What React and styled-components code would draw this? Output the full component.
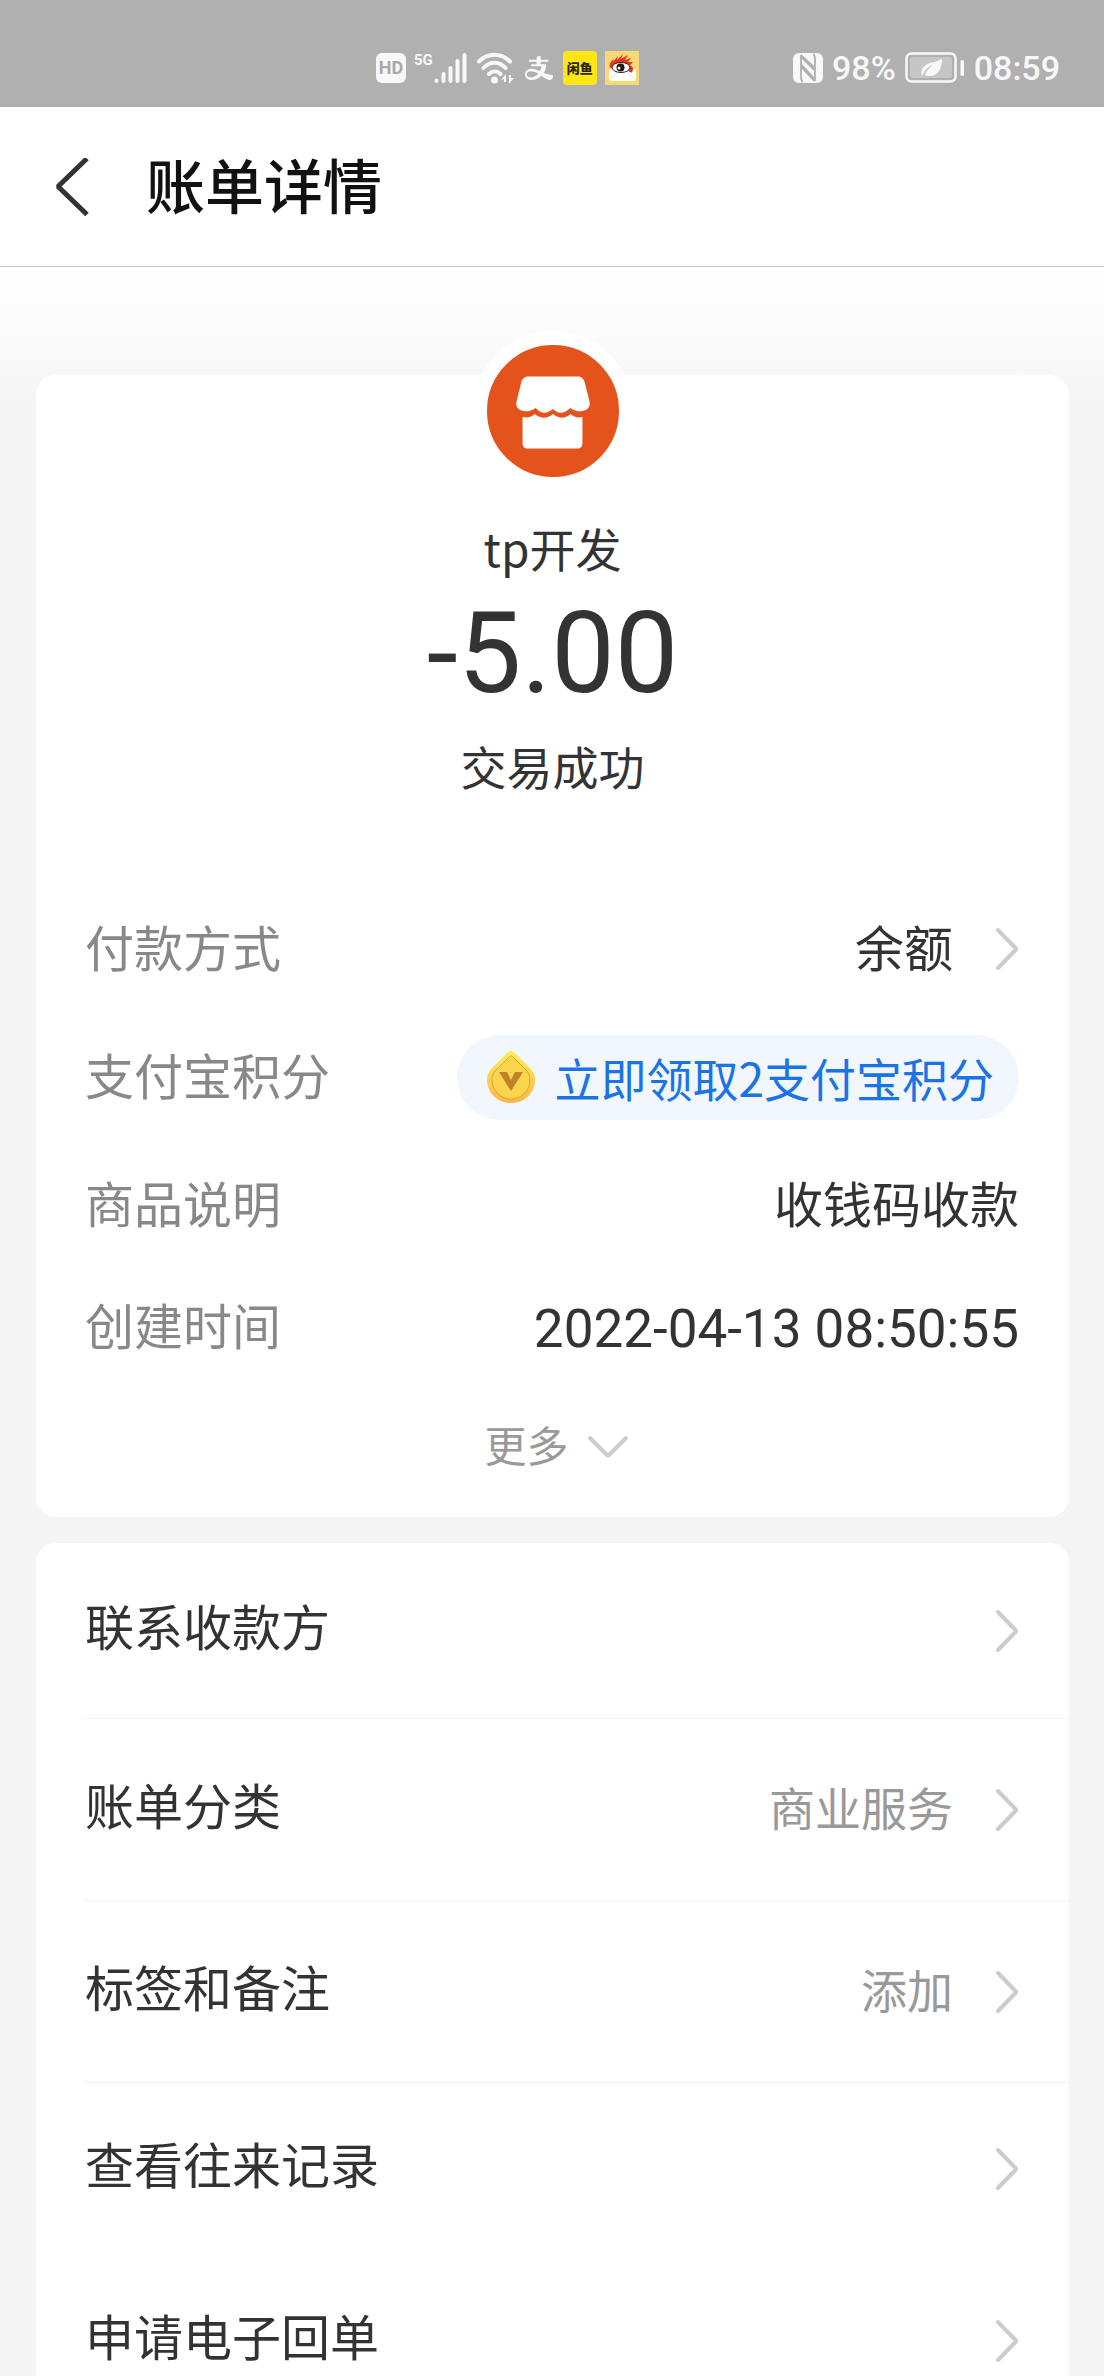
import React from "react";
import styled, { createGlobalStyle } from "styled-components";
import { AiOutlineAlipay } from "react-icons/ai";

const GlobalStyle = createGlobalStyle`
  * { box-sizing: border-box; }
  body {
    margin: 0;
    background: #f5f5f5;
    color: #333;
    font-family: "Noto Sans CJK SC", sans-serif;
  }
  a { color: inherit; text-decoration: none; }
  button {
    border: 0;
    padding: 0;
    background: none;
    color: inherit;
    font: inherit;
    cursor: pointer;
  }
  svg { display: block; flex: none; }
`;

const Screen = styled.div`
  height: 100vh;
  overflow: hidden;
  display: flex;
  flex-direction: column;
`;

const StatusBar = styled.div`
  flex: none;
  height: 107px;
  padding: 28px 44px 0 376px;
  display: flex;
  align-items: center;
  justify-content: space-between;
  background: #b0b0b0;
  color: #f8f8f8;
`;

const StatusGroup = styled.div`
  display: flex;
  align-items: center;
  gap: ${(p) => p.$gap}px;
`;

const HdBadge = styled.span`
  width: 30px;
  height: 30px;
  border-radius: 6px;
  background: #f8f8f8;
  color: #a8a8a8;
  font: 700 18px/30px Roboto, sans-serif;
  text-align: center;
`;

const Signal = styled.span`
  display: flex;
  align-items: flex-start;
`;

const Network = styled.span`
  font: 700 15px/16px Roboto, sans-serif;
`;

const FishBadge = styled.span`
  width: 34px;
  height: 34px;
  border-radius: 4px;
  background: #fde614;
  color: #2a2608;
  font-size: 13px;
  font-weight: 900;
  line-height: 34px;
  text-align: center;
`;

const StatusText = styled.span`
  font: 500 34px/40px Roboto, sans-serif;
`;

const Header = styled.header`
  flex: none;
  height: 160px;
  padding: 0 54px;
  display: flex;
  align-items: center;
  gap: 56px;
  background: #fff;
  border-bottom: 1px solid #c8c8c8;
`;

/* CJK glyphs sit low in their line box; the bottom padding centres them optically. */
const Title = styled.h1`
  margin: 0;
  padding-bottom: 6px;
  color: #111;
  font-size: 59px;
  font-weight: 500;
  line-height: 80px;
`;

const Content = styled.main`
  flex: 1;
  padding: 108px 35px 0 36px;
  display: flex;
  flex-direction: column;
  gap: 26px;
  background: linear-gradient(#fefefe 0, #fcfcfc 50px, #f5f5f5 140px);
`;

const Card = styled.section`
  flex: none;
  border-radius: 20px;
  background: #fff;
`;

const Summary = styled.div`
  display: flex;
  flex-direction: column;
  align-items: center;
`;

const Avatar = styled.div`
  width: 160px;
  height: 160px;
  margin-top: -44px;
  margin-bottom: 26px;
  border: 14px solid #fff;
  border-radius: 50%;
  background: #e5531d;
`;

const Line = styled.div`
  font-size: 46px;
  line-height: 60px;
`;

const Amount = styled.div`
  margin: 8px 0 12px;
  font: 400 113px/138px Roboto, sans-serif;
`;

const Details = styled.div`
  padding: 90px 50px 0 49px;
`;

const Row = styled.div`
  height: ${(p) => (p.$compact ? 116 : 128)}px;
  display: flex;
  align-items: center;
  justify-content: space-between;
  font-size: 49px;
  line-height: 64px;
`;

const Text = styled.span`
  padding-bottom: 6px;
`;

const Label = styled(Text)`
  color: #888;
`;

const Side = styled.span`
  display: flex;
  align-items: center;
  gap: 42px;
`;

const DateTime = styled.time`
  padding-top: 4px;
  font-family: Roboto, sans-serif;
  font-size: 53px;
`;

const PointsPill = styled.button`
  height: 85px;
  padding: 0 25px 0 30px;
  display: flex;
  align-items: center;
  gap: 19px;
  border-radius: 43px;
  background: #f1f7fd;
  color: #1a74e6;
  font-size: 46px;
  line-height: 60px;
`;

const More = styled.button`
  width: 100%;
  height: 132px;
  padding: 0 0 8px 8px;
  display: flex;
  align-items: center;
  justify-content: center;
  gap: 18px;
  color: #999;
  font-size: 42px;
  line-height: 56px;
`;

const Action = styled.a`
  height: ${(p) => p.$height}px;
  margin-left: 49px;
  padding-right: 50px;
  display: flex;
  align-items: center;
  justify-content: space-between;
  border-bottom: ${(p) => (p.$divided ? 1 : 0)}px solid #f2f2f2;
  font-size: 49px;
  line-height: 64px;
`;

const ActionLabel = styled.span`
  padding-bottom: 12px;
`;

const Hint = styled.span`
  padding-bottom: 8px;
  color: #999;
  font-size: 46px;
`;

const SignalIcon = () => (
  <svg width="34" height="32" viewBox="0 0 34 32" fill="none" stroke="#f8f8f8" strokeWidth="4" strokeLinecap="round">
    <path d="M3.500 28.500v.5M10.500 22v7M17.500 16v13M24.500 9v20M31.500 3v26" />
  </svg>
);

const WifiIcon = () => (
  <svg width="40" height="32" viewBox="0 0 40 32" fill="none" stroke="#f8f8f8" strokeWidth="4" strokeLinecap="round">
    <path d="M4 9.500C13 .5 26 .5 35 9.500M8.500 16c6.500-7 15.500-7 22 0M14 22c3.500-3.500 8-3.500 11.500 0" />
    <circle cx="19.500" cy="28" r="3.500" fill="#f8f8f8" stroke="none" />
    <path d="M26 28l5-6v8h-2v-3zM39 26l-5 6v-9h2v3z" fill="#f8f8f8" stroke="none" />
  </svg>
);

const EyeIcon = () => (
  <svg width="34" height="34" viewBox="0 0 34 34">
    <rect width="34" height="34" fill="#f9d976" />
    <path d="M4 18h27v9c0 2-1 3-3 3H7c-2 0-3-1-3-3z" fill="#fff" />
    <path d="M4 29l8-7M31 29l-8-7" stroke="#e4e0d8" strokeWidth="1" />
    <path d="M5 17c-1-4 1-7 4-9l-1 3 5-6-1 4 6-6-2 5 7-4-3 5 6-2-3 4 5 0-3 3c3 2 4 4 2 7-3 3-5-8-13-6-5 1-8 2-9 2z" fill="#e2361c" />
    <ellipse cx="16" cy="16.500" rx="9" ry="5" fill="#fff" stroke="#2c1c18" strokeWidth="1" />
    <circle cx="15.500" cy="16.500" r="4" fill="#1a1616" />
    <circle cx="14" cy="17" r="1.500" fill="#fff" />
  </svg>
);

const NfcIcon = () => (
  <svg width="30" height="30" viewBox="0 0 30 30">
    <rect width="30" height="30" rx="6" fill="#f8f8f8" />
    <path d="M8 2v22q0 4 2 5M22 28V6q0-4-2-5" fill="none" stroke="#b0b0b0" strokeWidth="1.800" />
    <path d="M8 1l13 12v5L8 5z" fill="#b0b0b0" />
    <path d="M9 11l12 13v5L9 16z" fill="#b0b0b0" />
  </svg>
);

const BatteryIcon = () => (
  <svg width="60" height="32" viewBox="0 0 60 32">
    <rect x="1.500" y="1.500" width="49" height="28" rx="5" fill="none" stroke="#f8f8f8" strokeWidth="2.500" />
    <rect x="5" y="5" width="42" height="21" rx="2" fill="#c6c6c6" />
    <path d="M17 25c-2-8 2-12 8-14 5-1 8-2 12-4 0 9-4 17-12 17-2 0-4 0-5-1 1-4 4-7 8-10-6 2-9 6-11 12z" fill="#f8f8f8" />
    <rect x="55.500" y="8" width="3.500" height="16" rx="1.500" fill="#f8f8f8" />
  </svg>
);

const BackIcon = () => (
  <svg width="36" height="58" viewBox="0 0 36 58" fill="none" stroke="#333" strokeWidth="5">
    <path d="M33 .5L4 28.500l29 28" strokeLinejoin="bevel" />
  </svg>
);

const ShopIcon = () => (
  <svg width="132" height="132" viewBox="0 0 130 130" fill="#fff">
    <path d="M41 31h48c4 0 6 2 7 5l5 20c2 8-9 13-19 6-6 6-12 6-17 1-6 5-12 5-17-1-10 7-21 2-19-6l5-20c1-3 3-5 7-5z" />
    <path d="M35 71c5 1 9 0 12-3 6 5 12 5 18 0 6 5 12 5 17 0 4 3 7 4 12 3v26c0 3-2 5-5 5H40c-3 0-5-2-5-5z" />
  </svg>
);

const CoinIcon = () => (
  <svg width="48" height="54" viewBox="0 0 48 54">
    <defs>
      <linearGradient id="coin" x1="0" y1="0" x2="0" y2="1">
        <stop offset="0" stopColor="#fbf05e" />
        <stop offset="1" stopColor="#fdb544" />
      </linearGradient>
    </defs>
    <path d="M24 1c2 0 3 1 5 3l12 12c4 4 7 8 7 14 0 13-11 23-24 23S0 43 0 30C0 24 3 20 7 16L19 4c2-2 3-3 5-3z" fill="url(#coin)" />
    <path d="M24 6c1 0 2 1 3 2l11 11c3 3 5 6 5 11 0 11-9 19-19 19S5 41 5 30c0-5 2-8 5-11L21 8c1-1 2-2 3-2z" fill="#fbd54d" stroke="#e0a52e" strokeWidth="1" />
    <path d="M12 22h8l4 8 4-8h8L24 41z" fill="#bf8428" />
  </svg>
);

const Chevron = () => (
  <svg width="24" height="44" viewBox="0 0 24 44" fill="none" stroke="#ccc" strokeWidth="4" strokeLinecap="round" strokeLinejoin="round">
    <path d="M3 3l17.500 18q1 1 0 2L3 41" />
  </svg>
);

const ChevronDown = () => (
  <svg width="42" height="24" viewBox="0 0 42 24" fill="none" stroke="#ccc" strokeWidth="4" strokeLinecap="round" strokeLinejoin="round">
    <path d="M3 3l17 17q1 1 2 0L39 3" />
  </svg>
);

const actions = [
  { label: "联系收款方", height: 176, divided: true },
  { label: "账单分类", hint: "商业服务", height: 182, divided: true },
  { label: "标签和备注", hint: "添加", height: 182, divided: true },
  { label: "查看往来记录", height: 172 },
  { label: "申请电子回单", height: 172 },
];

export default function App() {
  return (
    <Screen>
      <GlobalStyle />
      <StatusBar>
        <StatusGroup $gap={8}>
          <HdBadge>HD</HdBadge>
          <Signal>
            <Network>5G</Network>
            <SignalIcon />
          </Signal>
          <WifiIcon />
          <AiOutlineAlipay size={32} />
          <FishBadge>闲鱼</FishBadge>
          <EyeIcon />
        </StatusGroup>
        <StatusGroup $gap={9}>
          <NfcIcon />
          <StatusText>98%</StatusText>
          <BatteryIcon />
          <StatusText>08:59</StatusText>
        </StatusGroup>
      </StatusBar>
      <Header>
        <button aria-label="返回">
          <BackIcon />
        </button>
        <Title>账单详情</Title>
      </Header>
      <Content>
        <Card>
          <Summary>
            <Avatar>
              <ShopIcon />
            </Avatar>
            <Line>tp开发</Line>
            <Amount>-5.00</Amount>
            <Line>交易成功</Line>
          </Summary>
          <Details>
            <Row as="a" href="#payment">
              <Label>付款方式</Label>
              <Side>
                <Text>余额</Text>
                <Chevron />
              </Side>
            </Row>
            <Row>
              <Label>支付宝积分</Label>
              <PointsPill>
                <CoinIcon />
                立即领取2支付宝积分
              </PointsPill>
            </Row>
            <Row>
              <Label>商品说明</Label>
              <Text>收钱码收款</Text>
            </Row>
            <Row $compact>
              <Label>创建时间</Label>
              <DateTime dateTime="2022-04-13T08:50:55">2022-04-13 08:50:55</DateTime>
            </Row>
          </Details>
          <More>
            <Text>更多</Text>
            <ChevronDown />
          </More>
        </Card>
        <Card as="nav">
          {actions.map((item) => (
            <Action key={item.label} href="#action" $height={item.height} $divided={item.divided}>
              <ActionLabel>{item.label}</ActionLabel>
              <Side>
                {item.hint && <Hint>{item.hint}</Hint>}
                <Chevron />
              </Side>
            </Action>
          ))}
        </Card>
      </Content>
    </Screen>
  );
}
